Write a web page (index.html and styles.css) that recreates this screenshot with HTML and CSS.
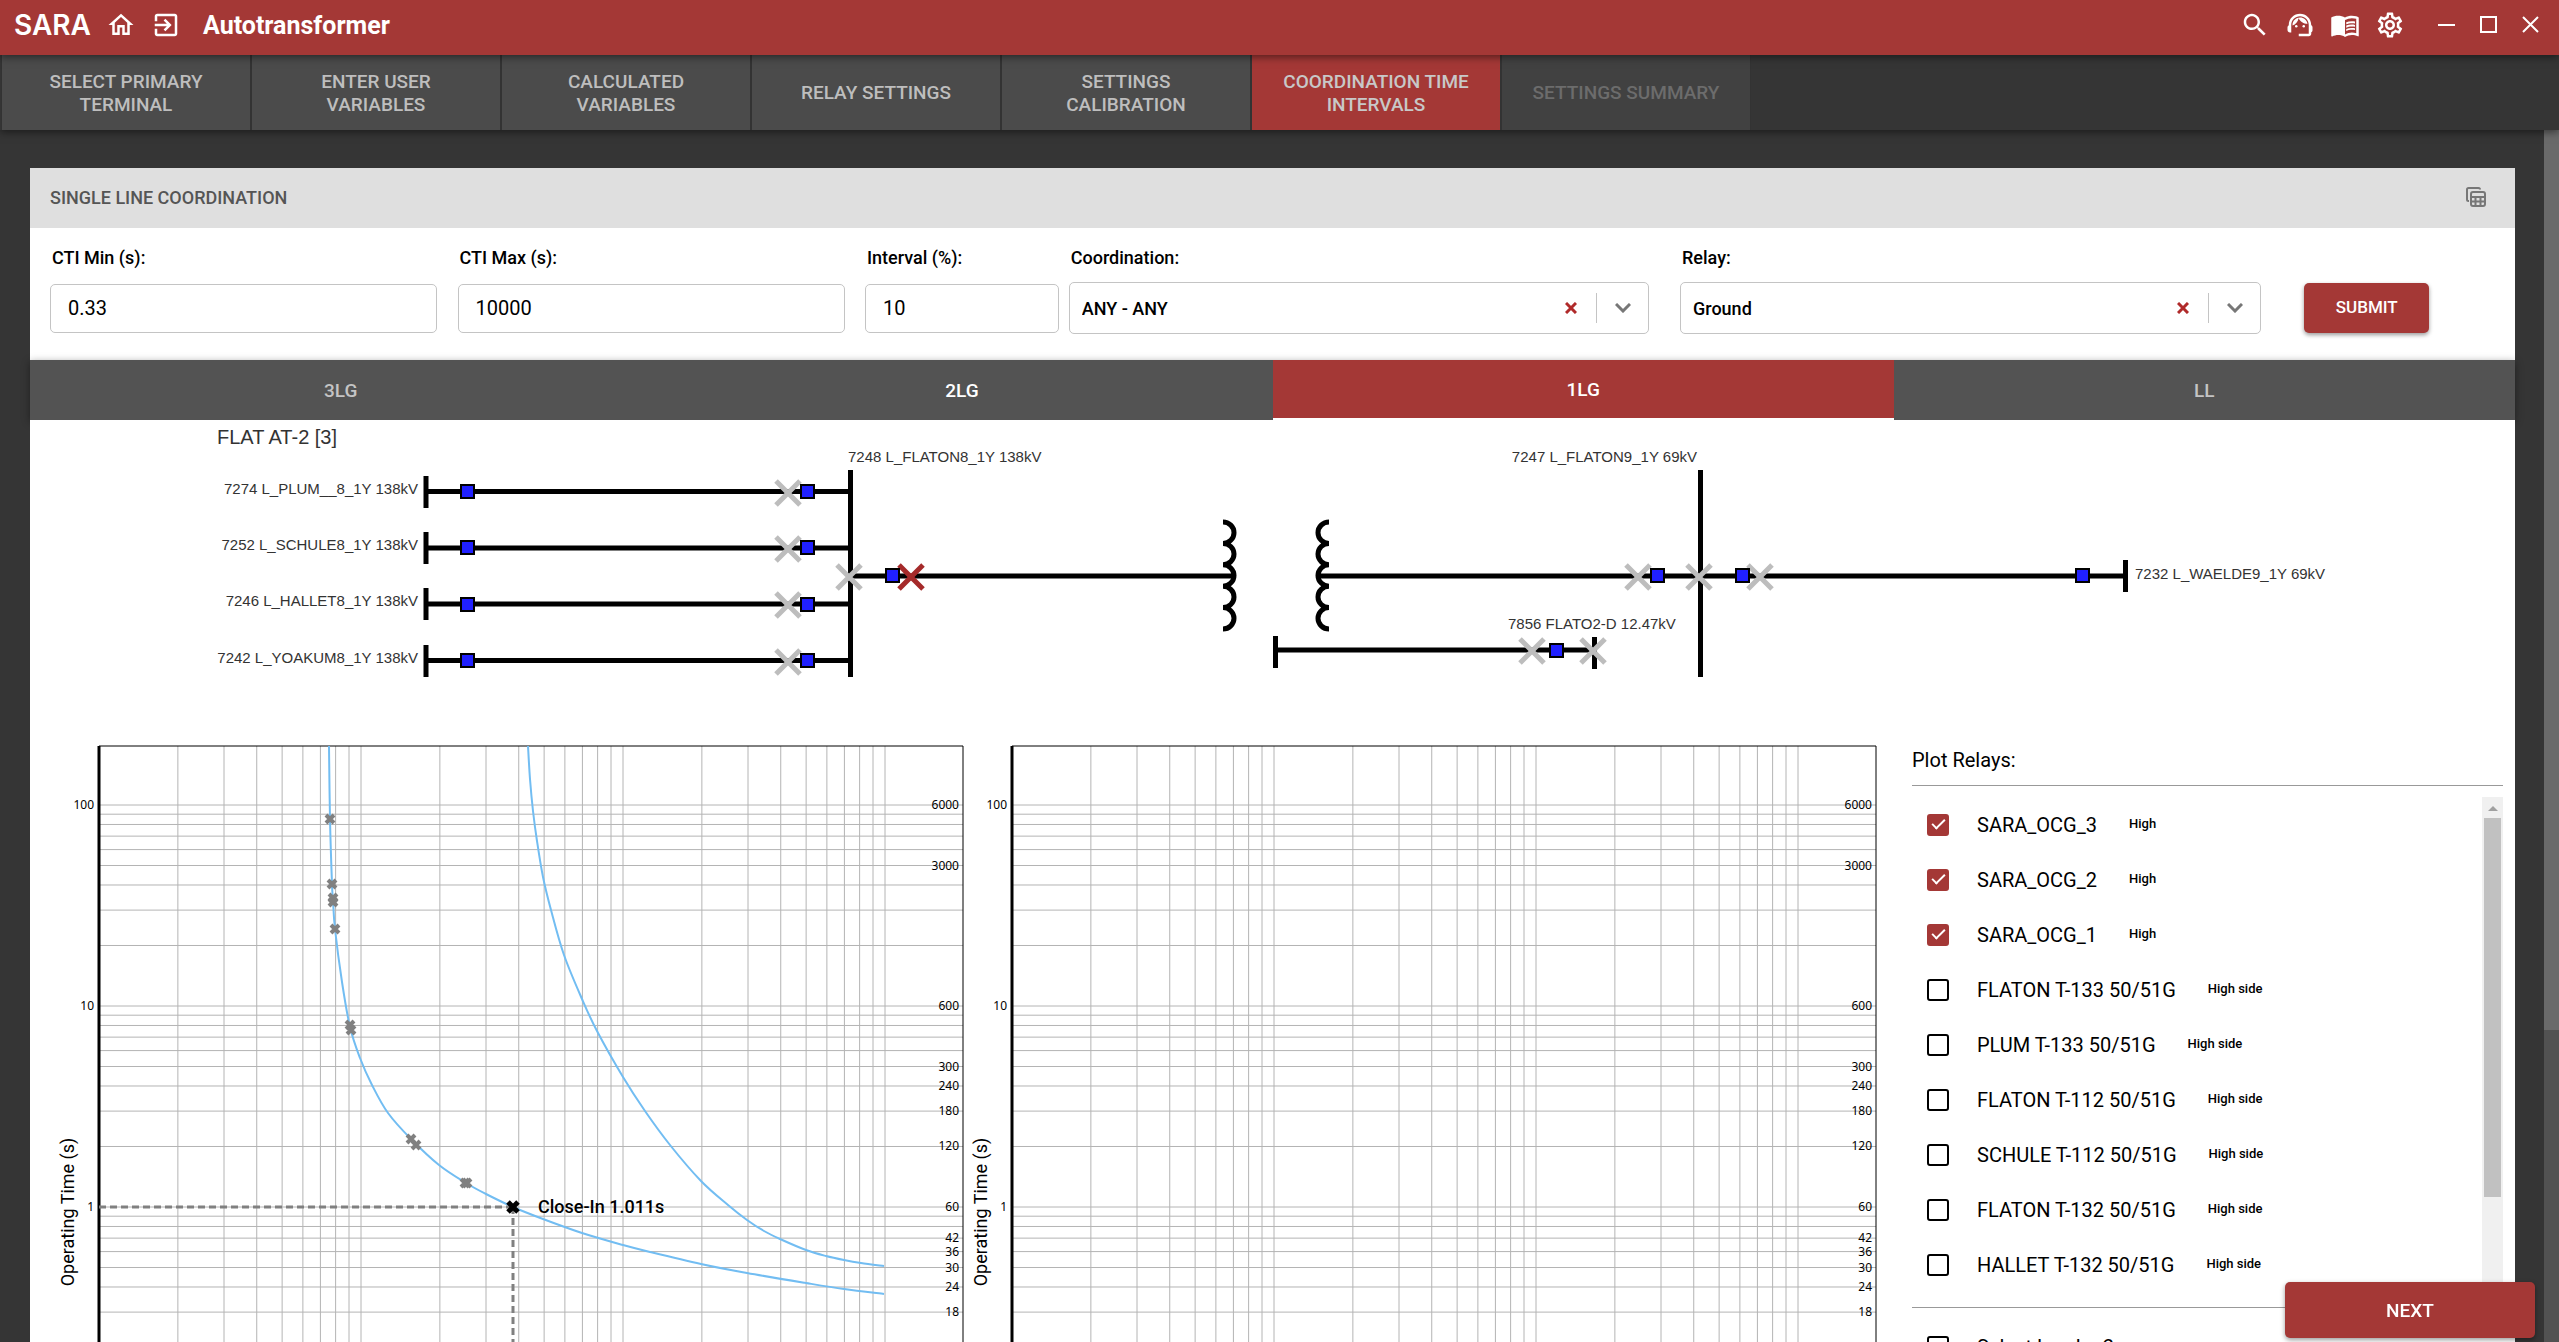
FILE: index.html
```html
<!doctype html>
<html lang="en">
<head>
    <meta charset="utf-8">
    <meta name="viewport" content="width=device-width, initial-scale=1">
    <title>SARA - Autotransformer</title>
    <link rel="stylesheet" href="styles.css">
</head>

<body>
    <header class="topbar">
        <span class="logo">SARA</span>
        <button class="icon-btn" type="button" aria-label="Home">
            <svg viewBox="0 0 24 24"><path d="M12 5.69l5 4.5V18h-2v-6H9v6H7v-7.81l5-4.5M12 3L2 12h3v8h6v-6h2v6h6v-8h3L12 3z"/></svg>
        </button>
        <button class="icon-btn" type="button" aria-label="Exit">
            <svg viewBox="0 0 24 24"><path d="M10.09 15.59 11.5 17l5-5-5-5-1.41 1.41L12.67 11H3v2h9.67l-2.58 2.59zM19 3H5c-1.11 0-2 .9-2 2v4h2V5h14v14H5v-4H3v4c0 1.1.89 2 2 2h14c1.1 0 2-.9 2-2V5c0-1.1-.9-2-2-2z"/></svg>
        </button>
        <h1 class="title">Autotransformer</h1>
        <div class="tools">
            <button class="icon-btn" type="button" aria-label="Search">
                <svg viewBox="0 0 24 24"><path d="M15.5 14h-.79l-.28-.27C15.41 12.59 16 11.11 16 9.5 16 5.91 13.09 3 9.5 3S3 5.91 3 9.5 5.91 16 9.5 16c1.61 0 3.09-.59 4.23-1.57l.27.28v.79l5 4.99L20.49 19l-4.99-5zm-6 0C7.01 14 5 11.99 5 9.5S7.01 5 9.5 5 14 7.01 14 9.5 11.99 14 9.5 14z"/></svg>
            </button>
            <button class="icon-btn" type="button" aria-label="Support">
                <svg viewBox="0 0 24 24"><path d="M21 12.22C21 6.73 16.74 3 12 3c-4.69 0-9 3.65-9 9.28-.6.34-1 .98-1 1.72v2c0 1.1.9 2 2 2h1v-6.1c0-3.87 3.13-7 7-7s7 3.13 7 7V19h-8v2h8c1.1 0 2-.9 2-2v-1.22c.59-.31 1-.92 1-1.64v-2.3c0-.7-.41-1.31-1-1.62z"/><circle cx="9" cy="13" r="1"/><circle cx="15" cy="13" r="1"/><path d="M18 11.03C17.52 8.18 15.04 6 12.05 6c-3.03 0-6.29 2.51-6.03 6.45 2.47-1.01 4.33-3.21 4.86-5.89 1.31 2.63 4 4.44 7.12 4.47z"/></svg>
            </button>
            <button class="icon-btn" type="button" aria-label="Manual">
                <svg viewBox="0 0 24 24"><path d="M21 5c-1.11-.35-2.33-.5-3.5-.5-1.95 0-4.05.4-5.5 1.5-1.45-1.1-3.55-1.5-5.5-1.5S2.45 4.9 1 6v14.65c0 .25.25.5.5.5.1 0 .15-.05.25-.05C3.1 20.45 5.05 20 6.5 20c1.95 0 4.05.4 5.5 1.5 1.35-.85 3.8-1.5 5.5-1.5 1.65 0 3.35.3 4.75 1.05.1.05.15.05.25.05.25 0 .5-.25.5-.5V6c-.6-.45-1.25-.75-2-1zm0 13.5c-1.1-.35-2.3-.5-3.5-.5-1.7 0-4.15.65-5.5 1.5V8c1.35-.85 3.8-1.5 5.5-1.5 1.2 0 2.4.15 3.5.5v11.5z"/><path d="M17.5 10.5c.88 0 1.73.09 2.5.26V9.24c-.79-.15-1.64-.24-2.5-.24-1.7 0-3.24.29-4.5.83v1.66c1.13-.64 2.7-.99 4.5-.99zM13 12.49v1.66c1.13-.64 2.7-.99 4.5-.99.88 0 1.73.09 2.5.26V11.9c-.79-.15-1.64-.24-2.5-.24-1.7 0-3.24.3-4.5.83zm4.5 1.84c-1.7 0-3.24.29-4.5.83v1.66c1.13-.64 2.7-.99 4.5-.99.88 0 1.73.09 2.5.26v-1.52c-.79-.16-1.64-.24-2.5-.24z"/></svg>
            </button>
            <button class="icon-btn" type="button" aria-label="Settings">
                <svg viewBox="0 0 24 24"><path d="M19.43 12.98c.04-.32.07-.64.07-.98 0-.34-.03-.66-.07-.98l2.11-1.65c.19-.15.24-.42.12-.64l-2-3.46c-.09-.16-.26-.25-.44-.25-.06 0-.12.01-.17.03l-2.49 1c-.52-.4-1.08-.73-1.69-.98l-.38-2.65C14.46 2.18 14.25 2 14 2h-4c-.25 0-.46.18-.49.42l-.38 2.65c-.61.25-1.17.59-1.69.98l-2.49-1c-.06-.02-.12-.03-.18-.03-.17 0-.34.09-.43.25l-2 3.46c-.13.22-.07.49.12.64l2.11 1.65c-.04.32-.07.65-.07.98 0 .33.03.66.07.98l-2.11 1.65c-.19.15-.24.42-.12.64l2 3.46c.09.16.26.25.44.25.06 0 .12-.01.17-.03l2.49-1c.52.4 1.08.73 1.69.98l.38 2.65c.03.24.24.42.49.42h4c.25 0 .46-.18.49-.42l.38-2.65c.61-.25 1.17-.59 1.69-.98l2.49 1c.06.02.12.03.18.03.17 0 .34-.09.43-.25l2-3.46c.12-.22.07-.49-.12-.64l-2.11-1.65zm-1.98-1.71c.04.31.05.52.05.73 0 .21-.02.43-.05.73l-.14 1.13.89.7 1.08.84-.7 1.21-1.27-.51-1.04-.42-.9.68c-.43.32-.84.56-1.25.73l-1.06.43-.16 1.13-.2 1.35h-1.4l-.19-1.35-.16-1.13-1.06-.43c-.43-.18-.83-.41-1.23-.71l-.91-.7-1.06.43-1.27.51-.7-1.21 1.08-.84.89-.7-.14-1.13c-.03-.31-.05-.54-.05-.74s.02-.43.05-.73l.14-1.13-.89-.7-1.08-.84.7-1.21 1.27.51 1.04.42.9-.68c.43-.32.84-.56 1.25-.73l1.06-.43.16-1.13.2-1.35h1.39l.19 1.35.16 1.13 1.06.43c.43.18.83.41 1.23.71l.91.7 1.06-.43 1.27-.51.7 1.21-1.07.85-.89.7.14 1.13zM12 8c-2.21 0-4 1.79-4 4s1.79 4 4 4 4-1.79 4-4-1.79-4-4-4zm0 6c-1.1 0-2-.9-2-2s.9-2 2-2 2 .9 2 2-.9 2-2 2z"/></svg>
            </button>
        </div>
        <div class="window-buttons">
            <button class="win-btn" type="button" aria-label="Minimize"><svg viewBox="0 0 18 18"><path d="M0 9h17"/></svg></button>
            <button class="win-btn" type="button" aria-label="Maximize"><svg viewBox="0 0 18 18"><path d="M1 1h15v15H1z"/></svg></button>
            <button class="win-btn" type="button" aria-label="Close"><svg viewBox="0 0 18 18"><path d="M1 1l15 15M16 1L1 16"/></svg></button>
        </div>
    </header>

    <nav class="steps">
        <button class="step" type="button">SELECT PRIMARY TERMINAL</button>
        <button class="step" type="button">ENTER USER VARIABLES</button>
        <button class="step" type="button">CALCULATED VARIABLES</button>
        <button class="step" type="button">RELAY SETTINGS</button>
        <button class="step" type="button">SETTINGS CALIBRATION</button>
        <button class="step active" type="button">COORDINATION TIME INTERVALS</button>
        <button class="step" type="button" disabled>SETTINGS SUMMARY</button>
    </nav>

    <div class="page">
        <main class="content">
            <section class="panel">
                <div class="panel-header">
                    <h2>SINGLE LINE COORDINATION</h2>
                    <button class="table-btn" type="button" aria-label="Show tables">
                        <svg viewBox="0 0 20 20"><path d="M3 14H2.500Q1 14 1 12.500V2.500Q1 1 2.500 1H12.500Q14 1 14 2.500" /><rect x="5" y="5" width="14" height="14" rx="2"/><path d="M5 10h14M5 14.500h14M9.500 10v9M14.500 10v9"/></svg>
                    </button>
                </div>

                <form class="filters">
                    <div class="field">
                        <label for="ctiMin">CTI Min (s):</label>
                        <div class="control"><input id="ctiMin" type="text" value="0.33"></div>
                    </div>
                    <div class="field">
                        <label for="ctiMax">CTI Max (s):</label>
                        <div class="control"><input id="ctiMax" type="text" value="10000"></div>
                    </div>
                    <div class="field">
                        <label for="interval">Interval (%):</label>
                        <div class="control"><input id="interval" type="text" value="10"></div>
                    </div>
                    <div class="field">
                        <label for="coordination">Coordination:</label>
                        <div class="control">
                            <select id="coordination"><option>ANY - ANY</option></select>
                            <div class="indicators">
                                <button class="clear" type="button" aria-label="Clear coordination"><svg viewBox="0 0 12 12"><path d="M1 1l10 10M11 1L1 11"/></svg></button>
                                <svg class="chevron" viewBox="0 0 16 10"><path d="M1 1l7 7 7-7"/></svg>
                            </div>
                        </div>
                    </div>
                    <div class="field">
                        <label for="relay">Relay:</label>
                        <div class="control">
                            <select id="relay"><option>Ground</option></select>
                            <div class="indicators">
                                <button class="clear" type="button" aria-label="Clear relay"><svg viewBox="0 0 12 12"><path d="M1 1l10 10M11 1L1 11"/></svg></button>
                                <svg class="chevron" viewBox="0 0 16 10"><path d="M1 1l7 7 7-7"/></svg>
                            </div>
                        </div>
                    </div>
                    <button class="submit" type="button">SUBMIT</button>
                </form>

                <div class="faults">
                    <button class="fault" type="button">3LG</button>
                    <button class="fault bright" type="button">2LG</button>
                    <button class="fault bright active" type="button">1LG</button>
                    <button class="fault" type="button">LL</button>
                </div>

                <!-- single line diagram -->
                <svg class="diagram" viewBox="30 420 2485 280">
                    <defs>
                        <rect id="breaker" class="breaker" x="-6" y="-6" width="13" height="13"/>
                        <path id="cross" d="M-12 -12L12 12M12 -12L-12 12"/>
                    </defs>
                    <text class="name" x="217" y="444">FLAT AT-2 [3]</text>
                    <text x="418" y="494" text-anchor="end">7274 L_PLUM__8_1Y 138kV</text>
                    <text x="418" y="550" text-anchor="end">7252 L_SCHULE8_1Y 138kV</text>
                    <text x="418" y="606" text-anchor="end">7246 L_HALLET8_1Y 138kV</text>
                    <text x="418" y="663" text-anchor="end">7242 L_YOAKUM8_1Y 138kV</text>
                    <text x="848" y="462">7248 L_FLATON8_1Y 138kV</text>
                    <text x="1697" y="462" text-anchor="end">7247 L_FLATON9_1Y 69kV</text>
                    <text x="1508" y="629">7856 FLATO2-D 12.47kV</text>
                    <text x="2135" y="579">7232 L_WAELDE9_1Y 69kV</text>

                    <path class="wire" d="M426 491.500H850M426 548H850M426 604H850M426 660.500H850M850 576H1234M1317 576H2125M1276 650H1594"/>
                    <path class="bus" d="M426 476v32M426 532v32M426 588v32M426 645v32M850.500 470v207M1700.500 470v207M2125.500 560v32M1275.500 636v32M1594.500 637v32"/>
                    <path class="coil" d="M1223 522a11 10.700 0 0 1 0 21.400a11 10.700 0 0 1 0 21.400a11 10.700 0 0 1 0 21.400a11 10.700 0 0 1 0 21.400a11 10.700 0 0 1 0 21.400"/>
                    <path class="coil" d="M1329 522a11 10.700 0 0 0 0 21.400a11 10.700 0 0 0 0 21.400a11 10.700 0 0 0 0 21.400a11 10.700 0 0 0 0 21.400a11 10.700 0 0 0 0 21.400"/>

                    <g class="fault-mark">
                        <use href="#cross" x="788" y="493"/>
                        <use href="#cross" x="788" y="549"/>
                        <use href="#cross" x="788" y="605"/>
                        <use href="#cross" x="788" y="662"/>
                        <use href="#cross" x="849" y="577"/>
                        <use href="#cross" x="1638" y="577"/>
                        <use href="#cross" x="1699" y="577"/>
                        <use href="#cross" x="1760" y="577"/>
                        <use href="#cross" x="1532" y="651"/>
                        <use href="#cross" x="1593" y="651"/>
                        <use class="selected" href="#cross" x="911" y="577"/>
                    </g>
                    <use href="#breaker" x="467" y="491"/>
                    <use href="#breaker" x="467" y="547"/>
                    <use href="#breaker" x="467" y="604"/>
                    <use href="#breaker" x="467" y="660"/>
                    <use href="#breaker" x="807" y="491"/>
                    <use href="#breaker" x="807" y="547"/>
                    <use href="#breaker" x="807" y="604"/>
                    <use href="#breaker" x="807" y="660"/>
                    <use href="#breaker" x="892" y="575"/>
                    <use href="#breaker" x="1657" y="575"/>
                    <use href="#breaker" x="1742" y="575"/>
                    <use href="#breaker" x="2082" y="575"/>
                    <use href="#breaker" x="1556" y="650"/>
                </svg>

                <div class="plots">
                    <svg class="chart" id="highChart" viewBox="55 700 913 940"></svg>
                    <svg class="chart" id="lowChart" viewBox="55 700 913 940"></svg>

                    <aside class="relays">
                        <h3>Plot Relays:</h3>
                        <div class="relay-scroll">
                            <ul class="relay-list">
                                <li><label><input type="checkbox" checked>SARA_OCG_3</label><b>High</b></li>
                                <li><label><input type="checkbox" checked>SARA_OCG_2</label><b>High</b></li>
                                <li><label><input type="checkbox" checked>SARA_OCG_1</label><b>High</b></li>
                                <li><label><input type="checkbox">FLATON T-133 50/51G</label><b>High side</b></li>
                                <li><label><input type="checkbox">PLUM T-133 50/51G</label><b>High side</b></li>
                                <li><label><input type="checkbox">FLATON T-112 50/51G</label><b>High side</b></li>
                                <li><label><input type="checkbox">SCHULE T-112 50/51G</label><b>High side</b></li>
                                <li><label><input type="checkbox">FLATON T-132 50/51G</label><b>High side</b></li>
                                <li><label><input type="checkbox">HALLET T-132 50/51G</label><b>High side</b></li>
                            </ul>
                            <div class="list-bar"><div class="list-thumb"></div></div>
                        </div>
                        <ul class="relay-list options">
                            <li><label><input type="checkbox">Select Leader 2</label></li>
                        </ul>
                    </aside>
                </div>
            </section>
        </main>
        <div class="page-bar"><div class="page-thumb"></div></div>
    </div>

    <button class="next" type="button">NEXT</button>
    <script src="charts.js"></script>
</body>
</html>
```
FILE: styles.css
```css
*,
*::after,
*::before {
  box-sizing: border-box;
}

body {
  height: 100vh;
  margin: 0;
  background: #353535;
  overflow: hidden;
  display: flex;
  flex-direction: column;
  font-family: Roboto, sans-serif;
  font-size: 18px;
  color: #000;
}

button {
  border: none;
  padding: 0;
  background: none;
  font-family: inherit;
  font-size: 19px;
  font-weight: 500;
  color: #fff;
  cursor: pointer;
}

svg {
  display: block;
}

/* top bar */
.topbar {
  position: relative;
  z-index: 2;
  flex: none;
  height: 55px;
  padding: 0 7px 5px 14px;
  display: flex;
  align-items: center;
  background: #a43836;
  color: #fff;
  box-shadow: 0 2px 8px rgba(0, 0, 0, 0.5);
}

.logo {
  width: 84px;
  font-family: Inter, sans-serif;
  font-size: 28px;
  font-weight: 600;
}

.icon-btn {
  width: 45px;
  height: 45px;
  display: flex;
  align-items: center;
  justify-content: center;
}

.icon-btn svg {
  width: 30px;
  height: 30px;
  fill: #fff;
}

.title {
  margin: 0 0 0 15px;
  font-size: 25px;
  font-weight: 700;
}

.tools {
  display: flex;
  margin-left: auto;
}

.window-buttons {
  display: flex;
  margin-left: 14px;
}

.win-btn {
  width: 42px;
  height: 42px;
  display: flex;
  align-items: center;
  justify-content: center;
}

.win-btn svg {
  width: 18px;
  height: 18px;
  fill: none;
  stroke: #fff;
  stroke-width: 2;
}

/* steps */
.steps {
  position: relative;
  z-index: 1;
  flex: none;
  height: 75px;
  padding-left: 1px;
  display: flex;
  background: #353535;
  box-shadow: 0 2px 8px rgba(0, 0, 0, 0.5);
}

.step {
  width: 250px;
  padding: 0 40px;
  border: 1px solid #333;
  border-width: 0 1px;
  background: #4b4b4b;
  color: #bebebe;
  line-height: 23px;
}

.step.active {
  padding: 0 20px;
  background: #a43836;
  color: #c8c8c8;
}

.step:disabled {
  padding: 0 20px;
  background: #414141;
  color: #6c6c6c;
}

/* page */
.page {
  flex: 1;
  min-height: 0;
  display: flex;
  overflow: hidden;
}

.content {
  flex: 1;
  min-width: 0;
  padding: 38px 29px 0 30px;
}

.page-bar {
  width: 15px;
  background: #525252;
}

.page-thumb {
  height: 900px;
  background: #6a6a6a;
}

.panel {
  background: #fff;
}

.panel-header {
  height: 60px;
  padding: 0 29px 2px 20px;
  display: flex;
  align-items: center;
  justify-content: space-between;
  background: #dfdfdf;
}

.panel-header h2 {
  margin: 0;
  font-size: 18px;
  font-weight: 500;
  color: #555;
}

.table-btn svg {
  width: 20px;
  height: 20px;
  fill: none;
  stroke: #777;
  stroke-width: 2;
}

/* form */
.filters {
  height: 132px;
  padding: 20px 20px 26px;
  display: grid;
  grid-template-columns: 2fr 2fr 1fr 3fr 3fr 1fr;
}

.field {
  width: 95%;
}

.field label {
  display: block;
  margin: 0 0 14px 2px;
  line-height: 20px;
  font-weight: 500;
}

.control {
  position: relative;
  height: 52px;
  display: flex;
  align-items: center;
}

.control input {
  width: 100%;
  height: 49px;
  padding: 0 17px;
  border: 1px solid #c4c4c4;
  border-radius: 5px;
  font-family: inherit;
  font-size: 20px;
}

.control select {
  width: 100%;
  height: 52px;
  padding: 0 12px;
  border: 1px solid #c4c4c4;
  border-radius: 5px;
  appearance: none;
  background: #fff;
  font-family: inherit;
  font-size: 18px;
  font-weight: 500;
  color: #000;
}

.indicators {
  position: absolute;
  top: 11px;
  right: 18px;
  height: 30px;
  display: flex;
  align-items: center;
}

.clear {
  width: 32px;
  height: 30px;
  border-right: 1px solid #c4c4c4;
}

.clear svg {
  width: 12px;
  height: 12px;
  fill: none;
  stroke: #b02a2a;
  stroke-width: 3;
}

.chevron {
  width: 16px;
  height: 10px;
  margin-left: 18px;
  fill: none;
  stroke: #777;
  stroke-width: 3;
}

.submit {
  width: 125px;
  height: 50px;
  margin: 35px 0 0 13px;
  padding-bottom: 2px;
  border-radius: 5px;
  background: #a43836;
  box-shadow: 0 2px 4px rgba(0, 0, 0, 0.4);
  font-size: 17px;
}

/* fault types */
.faults {
  display: flex;
  height: 60px;
  box-shadow: 0 2px 8px rgba(0, 0, 0, 0.4);
}

.fault {
  flex: 1;
  background: #535353;
  color: #c4c4c4;
}

.fault.bright {
  color: #fff;
}

.fault.active {
  background: #a43836;
  border-bottom: 2px solid #fff;
}

/* single line diagram */
.diagram {
  position: relative;
  width: 100%;
  background: #fff;
  font-family: "Liberation Sans", Arial, sans-serif;
  font-size: 15px;
  fill: #333;
}

.diagram .name {
  font-size: 20px;
}

.wire,
.bus,
.coil {
  fill: none;
  stroke: #000;
  stroke-width: 5;
}

.breaker {
  fill: #2020ff;
  stroke: #000;
  stroke-width: 2;
}

.fault-mark {
  stroke: #bdbdbd;
  stroke-width: 5;
}

.selected {
  stroke: #a52a2a;
}

/* plots */
.plots {
  padding: 0 12px 0 25px;
  display: grid;
  grid-template-columns: 913fr 913fr 622fr;
  align-items: start;
}

.chart {
  width: 100%;
}

.chart .grid {
  stroke: #b4b4b4;
  stroke-width: 1;
}

.chart .frame {
  fill: none;
  stroke: #000;
  stroke-width: 1;
}

.chart .axis {
  stroke: #000;
  stroke-width: 3;
}

.chart .tick {
  font-family: "Noto Sans", sans-serif;
  font-size: 12px;
  text-anchor: end;
}

.chart .axis-title {
  font-size: 18px;
  text-anchor: middle;
}

.chart .curve {
  fill: none;
  stroke: #72bdf2;
  stroke-width: 2;
}

.chart .dash {
  stroke: #808080;
  stroke-width: 3;
  stroke-dasharray: 7 4;
}

.chart .mark {
  stroke: #808080;
  stroke-width: 4;
}

.chart .mark.close-in {
  stroke: #000;
  stroke-width: 5;
}

.chart .note {
  font-size: 18px;
  font-weight: 500;
}

/* relay list */
.relays {
  margin-left: 31px;
  padding-top: 48px;
}

.relays h3 {
  margin: 0;
  padding-bottom: 13px;
  border-bottom: 1px solid #999;
  line-height: 24px;
  font-size: 20px;
  font-weight: 400;
}

.relay-scroll {
  display: flex;
  height: 521px;
  padding: 11px 0;
}

.relay-list {
  flex: 1;
  margin: 0;
  padding: 0;
  list-style: none;
}

.relay-list li {
  height: 55px;
  padding-left: 15px;
  display: flex;
  align-items: center;
}

.relay-list label {
  display: flex;
  align-items: center;
  font-size: 20px;
}

.relay-list b {
  margin: 0 0 2px 32px;
  font-size: 13px;
  font-weight: 500;
}

.relay-list input {
  width: 22px;
  height: 22px;
  margin: 0 28px 0 0;
  appearance: none;
  border: 2px solid #000;
  border-radius: 3px;
}

.relay-list input:checked {
  border-color: #a43836;
  background: #a43836;
}

.relay-list input:checked::after {
  content: "";
  display: block;
  width: 7px;
  height: 13px;
  margin: 0 0 0 6px;
  border: solid #fff;
  border-width: 0 2px 2px 0;
  transform: rotate(45deg);
}

.options {
  padding-top: 11px;
  border-top: 1px solid #999;
}

.list-bar {
  width: 21px;
  padding: 21px 2px;
  background: #f0f0f0;
  position: relative;
}

.list-bar::before {
  content: "";
  position: absolute;
  top: 9px;
  left: 6px;
  border: 5px solid transparent;
  border-top: none;
  border-bottom-color: #a0a0a0;
}

.list-thumb {
  height: 379px;
  background: #c1c1c1;
}

.next {
  position: fixed;
  z-index: 3;
  right: 24px;
  bottom: 4px;
  width: 250px;
  height: 56px;
  border-radius: 5px;
  background: #a43836;
  box-shadow: 0 2px 5px rgba(0, 0, 0, 0.4);
}
```
FILE: charts.js
```js
const LEFT = 99, RIGHT = 963, TOP = 746, BOTTOM = 1610;
const ONE_SECOND = 1207;

// pixels per decade
const X_DECADE = 262, Y_DECADE = 201;

const CYCLES = [6000, 3000, 600, 300, 240, 180, 120, 60, 42, 36, 30, 24, 18, 12, 6];

const CURVES = [
  [[329, 746], [330, 819], [332, 884], [333, 900], [335, 929], [342, 982], [350, 1027], [360, 1058], [372, 1085],
   [388, 1113], [411, 1139], [439, 1165], [466, 1183], [486, 1194], [513, 1207], [543, 1219], [582, 1233],
   [623, 1245], [650, 1252], [701, 1264], [747, 1273], [806, 1283], [844, 1289], [884, 1294]],
  [[528, 746], [530, 779], [533, 811], [537, 841], [543, 877], [551, 910], [564, 955], [582, 999], [597, 1031],
   [623, 1077], [645, 1111], [670, 1145], [701, 1181], [728, 1205], [747, 1220], [764, 1231], [780, 1239],
   [806, 1250], [826, 1256], [844, 1260], [861, 1263], [884, 1266]]
];

const MARKS = [[330, 819], [332, 884], [333, 898], [333, 902], [335, 929], [350, 1025], [351, 1030], [411, 1139],
  [416, 1145], [465, 1183], [467, 1183]];

const yOf = s => ONE_SECOND - Y_DECADE * Math.log10(s);

const line = (x1, y1, x2, y2, cls) => `<line class="${cls}" x1="${x1}" y1="${y1}" x2="${x2}" y2="${y2}"/>`;

const tick = (x, y, label) => `<text class="tick" x="${x}" y="${y + 4}">${label}</text>`;

const cross = (x, y, r, cls) =>
  `<path class="${cls}" d="M${x - r} ${y - r}l${2 * r} ${2 * r}M${x + r} ${y - r}l${-2 * r} ${2 * r}"/>`;

// Catmull-Rom through the sampled points
function smooth(p) {
  let d = `M${p[0]}`;
  for (let i = 0; i < p.length - 1; i++) {
    const a = p[i - 1] || p[i], b = p[i], c = p[i + 1], e = p[i + 2] || c;
    d += `C${b[0] + (c[0] - a[0]) / 6} ${b[1] + (c[1] - a[1]) / 6} ${c[0] - (e[0] - b[0]) / 6} ${c[1] - (e[1] - b[1]) / 6} ${c}`;
  }
  return `<path class="curve" d="${d}"/>`;
}

function frame() {
  let out = '';
  for (let dec = 0; dec < 4; dec++) {
    for (let n = 1; n < 10; n++) {
      const x = LEFT + X_DECADE * (dec + Math.log10(n));
      if (x > LEFT && x < RIGHT - 2) out += line(x, TOP, x, BOTTOM, 'grid');
    }
  }
  for (let dec = -2; dec < 3; dec++) {
    for (let n = 1; n < 10; n++) {
      const y = yOf(n * 10 ** dec);
      if (y > TOP + 2) out += line(LEFT, y, RIGHT, y, 'grid');
    }
  }
  out += `<path class="frame" d="M${LEFT} ${TOP}H${RIGHT}V${BOTTOM}H${LEFT}"/>`;
  out += line(LEFT, TOP, LEFT, BOTTOM, 'axis');
  [100, 10, 1, 0.1].forEach(s => out += tick(94, yOf(s), s));
  CYCLES.forEach(c => out += tick(959, yOf(c / 60), c));
  out += '<text class="axis-title" transform="translate(74 1212) rotate(-90)">Operating Time (s)</text>';
  return out;
}

document.getElementById('lowChart').innerHTML = frame();
document.getElementById('highChart').innerHTML = frame() +
  CURVES.map(smooth).join('') +
  line(LEFT, 1207, 513, 1207, 'dash') +
  line(513, 1207, 513, BOTTOM, 'dash') +
  MARKS.map(m => cross(m[0], m[1], 4, 'mark')).join('') +
  cross(513, 1207, 5, 'mark close-in') +
  '<text class="note" x="538" y="1213">Close-In 1.011s</text>';
```
